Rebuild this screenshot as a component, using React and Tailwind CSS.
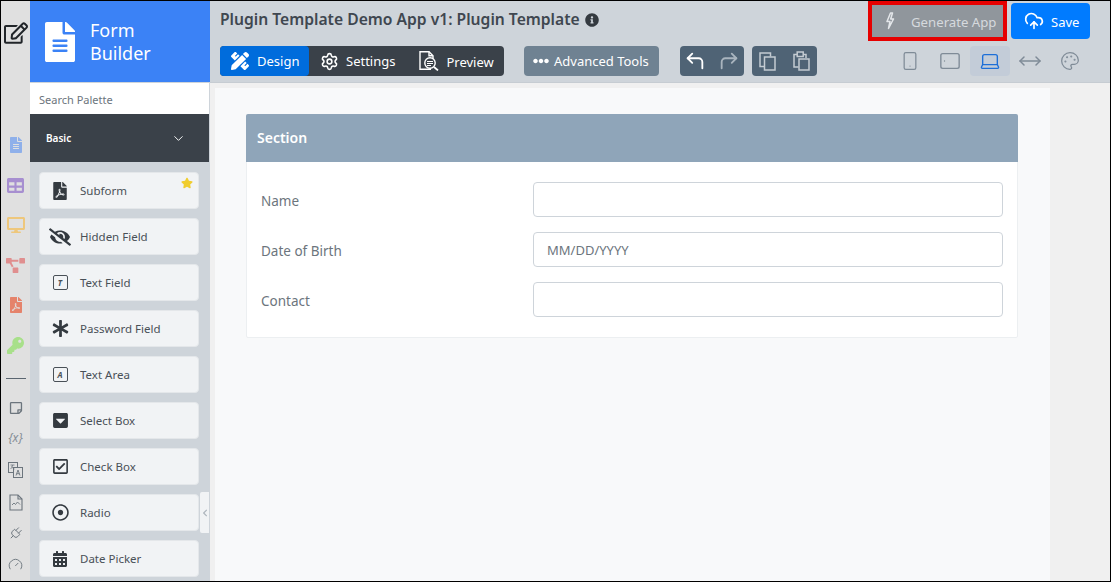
import React from "react"
import { FaFileAlt, FaTable, FaDesktop, FaProjectDiagram, FaFilePdf, FaKey, FaRegEdit, FaEyeSlash, FaAsterisk, FaCaretSquareDown, FaRegCheckSquare, FaRegDotCircle, FaCalendarAlt, FaPencilRuler, FaEllipsisH, FaInfoCircle, FaStar, FaRegStickyNote, FaChevronLeft } from "react-icons/fa";
import { Settings, CornerUpLeft, CornerUpRight, CloudUpload, Smartphone, Tablet, Laptop, MoveHorizontal, Palette, Plug, Gauge, ChevronDown } from "lucide-react";

function BoxLetter({ letter }) {
    return (
        <span className="w-[15px] h-[15px] rounded-[2px] border-[1.5px] border-[#495057] flex items-center justify-center text-[8px] italic font-bold text-[#495057]">{letter}</span>
    )
}

function PreviewIcon() {
    return (
        <svg width="20" height="20" viewBox="0 0 20 20" fill="none" stroke="white" strokeWidth="1.4">
            <path d="M12 18.3H1V.8h9l4 4v3" />
            <path d="M10 .8v4h4" />
            <circle cx="11" cy="12" r="5.2" />
            <path d="M8 10.5h6M8 12.5h6M8 14.5h4" strokeWidth="1.1" />
            <path d="M15 16l4 3.4" strokeWidth="1.8" />
        </svg>
    )
}

function BoltIcon() {
    return (
        <svg width="10" height="18" viewBox="0 0 10 18" fill="none" stroke="#e4e7ea" strokeWidth="1.5" strokeLinejoin="round">
            <path d="M5.5 1 2 9.5h3l-1.5 7L8.5 7H5.7L7.5 1z" />
        </svg>
    )
}

function CopyIcon() {
    return (
        <svg width="17" height="19" viewBox="0 0 17 19" fill="none" stroke="currentColor" strokeWidth="1.5">
            <path d="M5 14.5H1V1h10.5v3.5" />
            <rect x="5.5" y="5" width="10.5" height="13" />
        </svg>
    )
}

function PasteIcon() {
    return (
        <svg width="17" height="20" viewBox="0 0 17 20" fill="none" stroke="currentColor" strokeWidth="1.5">
            <path d="M5.5 16H1V3.5h3M10 3.5h3V7" />
            <rect x="4.2" y="1" width="6" height="4.5" />
            <rect x="6" y="8" width="10" height="11" />
        </svg>
    )
}

function TranslateIcon() {
    return (
        <svg width="15" height="16" viewBox="0 0 15 16" fill="none" stroke="#6c757d" strokeWidth="1">
            <rect x=".5" y=".5" width="9" height="10" fill="#e0e0e0" />
            <rect x="5.5" y="5.5" width="9" height="10" fill="#e0e0e0" />
            <path d="M2.5 3h4M4.5 3c0 2-1 3-2 4M3.5 4.5c1 1.5 2 2 3 2.5" strokeWidth=".8" />
            <path d="M8 13.5 10 8l2 5.5M8.7 11.7h2.600" strokeWidth=".9" />
        </svg>
    )
}

function ChartFileIcon() {
    return (
        <svg width="14" height="17" viewBox="0 0 14 17" fill="none" stroke="#6c757d" strokeWidth="1.1">
            <path d="M1 1h8l4 4v11H1z" />
            <path d="M9 1v4h4" />
            <path d="M3 11l2-2 1.5 1.5L8.5 8l2.5 2.5" strokeWidth=".9" />
        </svg>
    )
}

const palette = [
    { label: "Subform", icon: <FaFilePdf size={18} />, star: true },
    { label: "Hidden Field", icon: <FaEyeSlash size={22} /> },
    { label: "Text Field", icon: <BoxLetter letter="T" /> },
    { label: "Password Field", icon: <FaAsterisk size={17} /> },
    { label: "Text Area", icon: <BoxLetter letter="A" /> },
    { label: "Select Box", icon: <FaCaretSquareDown size={17} /> },
    { label: "Check Box", icon: <FaRegCheckSquare size={17} /> },
    { label: "Radio", icon: <FaRegDotCircle size={17} /> },
    { label: "Date Picker", icon: <FaCalendarAlt size={16} /> },
]

const rail = [
    { icon: <FaFileAlt size={16} className="text-[#8fb0ea]" /> },
    { icon: <FaTable size={17} className="text-[#a78fd0]" /> },
    { icon: <FaDesktop size={18} className="text-[#eec77c]" /> },
    { icon: <FaProjectDiagram size={19} className="text-[#e08f8f]" /> },
    { icon: <FaFilePdf size={16} className="text-[#e5836b]" /> },
    { icon: <FaKey size={17} className="text-[#a8e08a]" /> },
]

const rail2 = [
    { icon: <FaRegStickyNote size={14} className="text-[#6c757d]" />, h: "h-[30px]" },
    { icon: <span className="text-[12px] italic text-[#868e96]">{"{x}"}</span>, h: "h-[30px]" },
    { icon: <TranslateIcon />, h: "h-[34px]" },
    { icon: <ChartFileIcon />, h: "h-[30px]" },
    { icon: <Plug size={15} strokeWidth={1.5} className="text-[#6c757d] rotate-45" />, h: "h-[32px]" },
    { icon: <Gauge size={15} strokeWidth={1.5} className="text-[#6c757d]" />, h: "h-[31px]" },
]

const fields = [
    { label: "Name", placeholder: "" },
    { label: "Date of Birth", placeholder: "MM/DD/YYYY" },
    { label: "Contact", placeholder: "" },
]

export default function App() {
    return (
        <main className="relative w-[1111px] h-[582px] border border-black flex overflow-hidden bg-[#f0f0f0] font-['Noto_Sans',sans-serif]">
            {/* icon rail */}
            <nav className="w-[29px] shrink-0 bg-[#e0e0e0] flex flex-col items-center">
                <div className="h-[124px] pt-[20px] flex justify-center w-full">
                    <FaRegEdit size={24} className="text-[#212529]" />
                </div>
                {rail.map((item, index) => (
                    <div key={index} className="h-[40px] flex items-center justify-center w-full">{item.icon}</div>
                ))}
                <div className="w-[20px] h-[1px] bg-[#5a6570] mt-[13px] mb-[14px]"></div>
                {rail2.map((item, index) => (
                    <div key={index} className={`${item.h} flex items-center justify-center w-full`}>{item.icon}</div>
                ))}
            </nav>

            {/* palette */}
            <aside className="relative w-[180px] shrink-0 flex flex-col bg-[#ced4da]">
                <div className="h-[81px] bg-[#3b82f6] flex items-center pl-[15px] gap-[15px] text-white">
                    <FaFileAlt className="w-[30px] h-[40px]" />
                    <span className="text-[18px] leading-[23px]">Form<br />Builder</span>
                </div>
                <div className="h-[31px] mt-[1px] mr-[1px] bg-white flex items-center pt-[4px] pl-[9px] text-[11px] text-[#6c757d]">Search Palette</div>
                <div className="h-[48px] bg-[#3a4149] mr-[1px] flex items-center justify-between pl-[16px] pr-[23px] text-white text-[10px] font-semibold">
                    <span className="mt-[1px]">Basic</span>
                    <ChevronDown size={15} strokeWidth={1.5} />
                </div>
                <div className="flex flex-col gap-[9px] pt-[10px] pl-[9px]">
                    {palette.map((item, index) => (
                        <div key={index} className="relative w-[160px] h-[37px] bg-[#f1f3f5] border border-[#e4e7ea] rounded-[4px] flex items-center text-[#495057]">
                            <span className="w-[40px] flex justify-center text-[#343a40]">{item.icon}</span>
                            <span className="text-[11.5px] mt-[1px]">{item.label}</span>
                            {item.star && <FaStar size={12} className="absolute top-[4px] right-[5px] text-[#f0cd2e]" />}
                        </div>
                    ))}
                </div>
                <div className="absolute left-[170px] top-[491px] w-[9px] h-[41px] bg-[#f1f3f5] flex items-center justify-center rounded-l-[2px]">
                    <FaChevronLeft size={8} className="text-[#adb5bd]" />
                </div>
            </aside>

            <div className="flex-1 flex flex-col min-w-0">
                {/* top bar */}
                <header className="h-[82px] shrink-0 bg-[#ced4da] border-b border-[#c6ccd2] pl-[10px] pr-[20px] flex flex-col">
                    <div className="h-[45px] flex justify-between">
                        <div className="flex items-center gap-[5px] h-[38px] text-[#3f4750] text-[15.65px] font-semibold">
                            <span>Plugin Template Demo App v1: Plugin Template</span>
                            <FaInfoCircle size={14} className="text-[#343a40]" />
                        </div>
                        <div className="flex gap-[4px]">
                            <div className="w-[139px] h-[40px] border-[4px] border-[#e60000] bg-[#90969c] flex items-center gap-[16px] pl-[13px] text-[#d6dade] text-[13.2px]">
                                <BoltIcon />
                                <span className="mt-[4px]">Generate App</span>
                            </div>
                            <div className="w-[79px] h-[36px] mt-[2px] bg-[#007bff] rounded-[4px] flex items-center gap-[7px] pl-[13px] text-white text-[13px]">
                                <CloudUpload size={20} />
                                <span className="mt-[4px]">Save</span>
                            </div>
                        </div>
                    </div>
                    <div className="flex items-center text-white text-[13px] h-[30px]">
                        <div className="flex h-[30px] w-[284px] bg-[#3a4149] rounded-[4px]">
                            <div className="w-[89px] bg-[#006cdc] rounded-[4px] flex items-center gap-[8px] pl-[11px]">
                                <FaPencilRuler size={18} />
                                <span className="mt-[2px]">Design</span>
                            </div>
                            <div className="flex items-center gap-[7px] pl-[11px]">
                                <Settings size={19} />
                                <span className="mt-[2px]">Settings</span>
                            </div>
                            <div className="flex items-center gap-[7px] pl-[24px]">
                                <PreviewIcon />
                                <span className="mt-[3px]">Preview</span>
                            </div>
                        </div>
                        <div className="ml-[20px] w-[135px] h-[30px] bg-[#6f8292] rounded-[4px] flex items-center gap-[5px] pl-[9px]">
                            <FaEllipsisH size={16} />
                            <span className="mt-[2px]">Advanced Tools</span>
                        </div>
                        <div className="ml-[21px] w-[64px] h-[30px] bg-[#4f6375] rounded-[4px] flex items-center justify-between px-[4px]">
                            <CornerUpLeft size={22} />
                            <CornerUpRight size={22} className="text-[#a9b4be]" />
                        </div>
                        <div className="ml-[8px] w-[65px] h-[30px] bg-[#4f6375] rounded-[4px] flex items-center justify-between px-[7px] text-[#c4cbd2]">
                            <CopyIcon />
                            <PasteIcon />
                        </div>
                        <div className="ml-auto flex items-center text-[#7f8b97]">
                            <div className="w-[40px] flex justify-center"><Smartphone size={20} strokeWidth={1.5} /></div>
                            <div className="w-[40px] flex justify-center"><Tablet size={22} strokeWidth={1.5} className="rotate-90" /></div>
                            <div className="w-[40px] h-[30px] rounded-[4px] bg-[#c3ccd8] flex items-center justify-center text-[#1d6fd8]"><Laptop size={22} strokeWidth={1.5} /></div>
                            <div className="w-[40px] flex justify-center"><MoveHorizontal size={24} strokeWidth={1.5} /></div>
                            <div className="w-[40px] flex justify-center"><Palette size={20} strokeWidth={1.5} /></div>
                        </div>
                    </div>
                </header>

                {/* canvas */}
                <div className="flex-1 ml-[5px] mr-[60px] mt-[5px] bg-[#f8f9fa] pt-[26px] pl-[31px] pr-[32px]">
                    <section className="bg-white border border-[#eceff1] rounded-[2px]">
                        <div className="h-[48px] -m-[1px] bg-[#8fa5b9] flex items-center pl-[11px] pb-[2px] text-white text-[14px] font-semibold rounded-t-[2px]">Section</div>
                        <div className="pt-[21px] pb-[20px] pl-[14px] pr-[14px] flex flex-col gap-[15px]">
                            {fields.map((field, index) => (
                                <div key={index} className="flex items-center h-[35px]">
                                    <label className="w-[272px] pt-[3px] text-[13.5px] text-[#6c757d]">{field.label}</label>
                                    <input readOnly placeholder={field.placeholder} className="flex-1 h-[35px] border border-[#ced4da] rounded-[4px] bg-white px-[13px] text-[13px] placeholder:text-[#6c757d] outline-none" />
                                </div>
                            ))}
                        </div>
                    </section>
                </div>
            </div>
        </main>
    )
}
